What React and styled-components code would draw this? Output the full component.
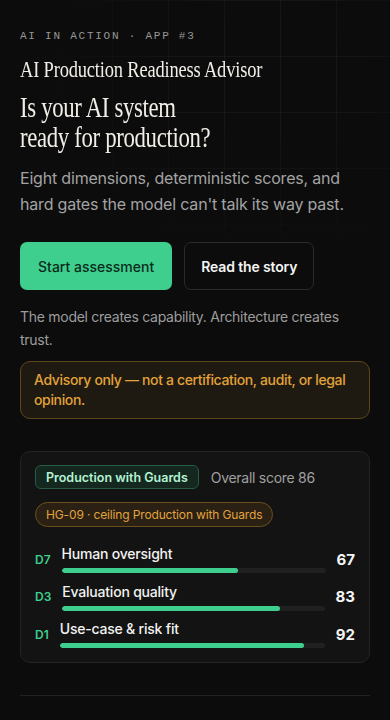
import React from 'react'
import styled, { createGlobalStyle } from 'styled-components'

const GlobalStyle = createGlobalStyle`
  html, body {
    margin: 0;
    padding: 0;
    background: #0c0c0c;
  }
  body {
    font-family: Inter, "Noto Sans", sans-serif;
    color: #ededed;
    -webkit-font-smoothing: antialiased;
  }
  * { box-sizing: border-box; }
`

const dimensions = [
  { code: 'D7', name: 'Human oversight', score: 67 },
  { code: 'D3', name: 'Evaluation quality', score: 83 },
  { code: 'D1', name: 'Use-case & risk fit', score: 92 },
]

function App() {
  return (
    <>
      <GlobalStyle />
      <Page>
        <GridGlow />

        <Hero>
          <Eyebrow>AI IN ACTION · APP #3</Eyebrow>
          <AppTitle>AI Production Readiness Advisor</AppTitle>
          <Headline>
            Is your AI system
            <br />
            ready for production?
          </Headline>
          <Lead>
            Eight dimensions, deterministic scores, and hard gates the model can't talk its way past.
          </Lead>

          <Actions>
            <PrimaryButton>Start assessment</PrimaryButton>
            <GhostButton>Read the story</GhostButton>
          </Actions>

          <Tagline>The model creates capability. Architecture creates trust.</Tagline>

          <Notice>Advisory only — not a certification, audit, or legal opinion.</Notice>
        </Hero>

        <ScoreCard>
          <CardHead>
            <VerdictBadge>Production with Guards</VerdictBadge>
            <Overall>Overall score 86</Overall>
          </CardHead>

          <GatePill>HG-09 · ceiling Production with Guards</GatePill>

          <Dims>
            {dimensions.map((d) => (
              <DimRow key={d.code}>
                <DimCode>{d.code}</DimCode>
                <DimBody>
                  <DimName>{d.name}</DimName>
                  <Track>
                    <Fill style={{ width: `${d.score}%` }} />
                  </Track>
                </DimBody>
                <DimScore>{d.score}</DimScore>
              </DimRow>
            ))}
          </Dims>
        </ScoreCard>

        <Divider />

        <SectionLabel>HOW IT WORKS · 8 DIMENSIONS</SectionLabel>
      </Page>
    </>
  )
}

export default App

const Page = styled.div`
  position: relative;
  min-height: 720px;
  padding: 0 20px 40px;
  overflow: hidden;
  background: #0c0c0c;
`

const GridGlow = styled.div`
  position: absolute;
  inset: 0 0 auto 0;
  height: 420px;
  pointer-events: none;
  background-image:
    linear-gradient(to right, rgba(255,255,255,0.045) 1px, transparent 1px),
    linear-gradient(to bottom, rgba(255,255,255,0.045) 1px, transparent 1px);
  background-size: 56px 56px;
  -webkit-mask-image: radial-gradient(ellipse 60% 45% at 68% 18%, #000 30%, transparent 100%);
  mask-image: radial-gradient(ellipse 60% 45% at 68% 18%, #000 30%, transparent 100%);
`

const Hero = styled.section`
  position: relative;
  display: flex;
  flex-direction: column;
  align-items: flex-start;
  padding-top: 28px;
`

const Eyebrow = styled.div`
  font-family: "Liberation Mono", "DejaVu Sans Mono", monospace;
  font-size: 11px;
  line-height: 16px;
  letter-spacing: 0.16em;
  color: #979797;
`

const serifText = `
  font-family: "Liberation Serif", "DejaVu Serif", serif;
  font-weight: 400;
  transform-origin: left top;
  white-space: nowrap;
  color: #f1eee7;
`

const AppTitle = styled.h1`
  ${serifText}
  margin: 10px 0 0;
  font-size: 24px;
  line-height: 30px;
  letter-spacing: -0.01em;
  transform: scaleX(0.77);
`

const Headline = styled.h2`
  ${serifText}
  margin: 8px 0 0;
  font-size: 30px;
  line-height: 30px;
  letter-spacing: -0.015em;
  transform: scaleX(0.76);
`

const Lead = styled.p`
  margin: 13px 0 0;
  font-size: 16px;
  line-height: 26px;
  letter-spacing: -0.012em;
  color: #a3a3a3;
  max-width: 340px;
`

const Actions = styled.div`
  display: flex;
  gap: 12px;
  margin-top: 25px;
`

const PrimaryButton = styled.button`
  height: 48px;
  padding: 0 18px;
  border: 0;
  border-radius: 7px;
  background: #3ecf8e;
  color: #0b2a1b;
  font-family: Inter, sans-serif;
  font-size: 14px;
  font-weight: 500;
  cursor: pointer;
`

const GhostButton = styled(PrimaryButton)`
  padding: 0 16px;
  background: #0c0c0c;
  border: 1px solid #2a2a2a;
  color: #f4f4f4;
  font-weight: 600;
  letter-spacing: -0.01em;
`

const Tagline = styled.p`
  margin: 15px 0 0;
  font-size: 14px;
  line-height: 23px;
  letter-spacing: -0.02em;
  color: #9d9d9d;
`

const Notice = styled.div`
  align-self: stretch;
  margin-top: 10px;
  padding: 8px 12px 8px 13px;
  border: 1px solid #5c4519;
  border-radius: 10px;
  background: #1f1a11;
  color: #e2a23b;
  font-size: 14px;
  font-weight: 500;
  line-height: 20px;
  letter-spacing: -0.025em;
`

const ScoreCard = styled.section`
  position: relative;
  margin-top: 32px;
  padding: 13px 14px 14px;
  border: 1px solid #232323;
  border-radius: 10px;
  background: #131313;
`

const CardHead = styled.div`
  display: flex;
  align-items: center;
  gap: 12px;
`

const VerdictBadge = styled.span`
  display: inline-flex;
  align-items: center;
  height: 24px;
  padding: 0 10px;
  border: 1px solid #275b44;
  border-radius: 6px;
  background: #14281f;
  color: #b4f3d4;
  font-size: 12.5px;
  font-weight: 600;
`

const Overall = styled.span`
  font-size: 14px;
  letter-spacing: -0.02em;
  color: #a0a0a0;
`

const GatePill = styled.span`
  display: inline-flex;
  align-items: center;
  height: 25px;
  margin-top: 13px;
  padding: 0 10px;
  border: 1px solid #6b4e1d;
  border-radius: 999px;
  background: #2a2114;
  color: #e3a33d;
  font-size: 12px;
  letter-spacing: -0.012em;
`

const Dims = styled.div`
  display: flex;
  flex-direction: column;
  gap: 9.5px;
  margin-top: 18px;
`

const DimRow = styled.div`
  display: flex;
  align-items: center;
  gap: 11px;
`

const DimCode = styled.span`
  font-size: 12px;
  font-weight: 600;
  color: #3ecf8e;
`

const DimBody = styled.div`
  flex: 1;
  display: flex;
  flex-direction: column;
  gap: 5px;
`

const DimName = styled.span`
  font-size: 14px;
  font-weight: 500;
  line-height: 18px;
  letter-spacing: -0.015em;
  color: #f2f2f2;
`

const Track = styled.div`
  height: 5px;
  border-radius: 999px;
  background: #202020;
  overflow: hidden;
`

const Fill = styled.div`
  height: 100%;
  border-radius: 999px;
  background: #3ecf8e;
`

const DimScore = styled.span`
  min-width: 18px;
  text-align: right;
  font-size: 15px;
  font-weight: 700;
  color: #f5f5f5;
`

const Divider = styled.hr`
  margin: 32px 0 0;
  border: 0;
  border-top: 1px solid #222;
`

const SectionLabel = styled.div`
  margin-top: 26px;
  font-family: "Liberation Mono", "DejaVu Sans Mono", monospace;
  font-size: 11px;
  letter-spacing: 0.155em;
  color: #8d8d8d;
`
